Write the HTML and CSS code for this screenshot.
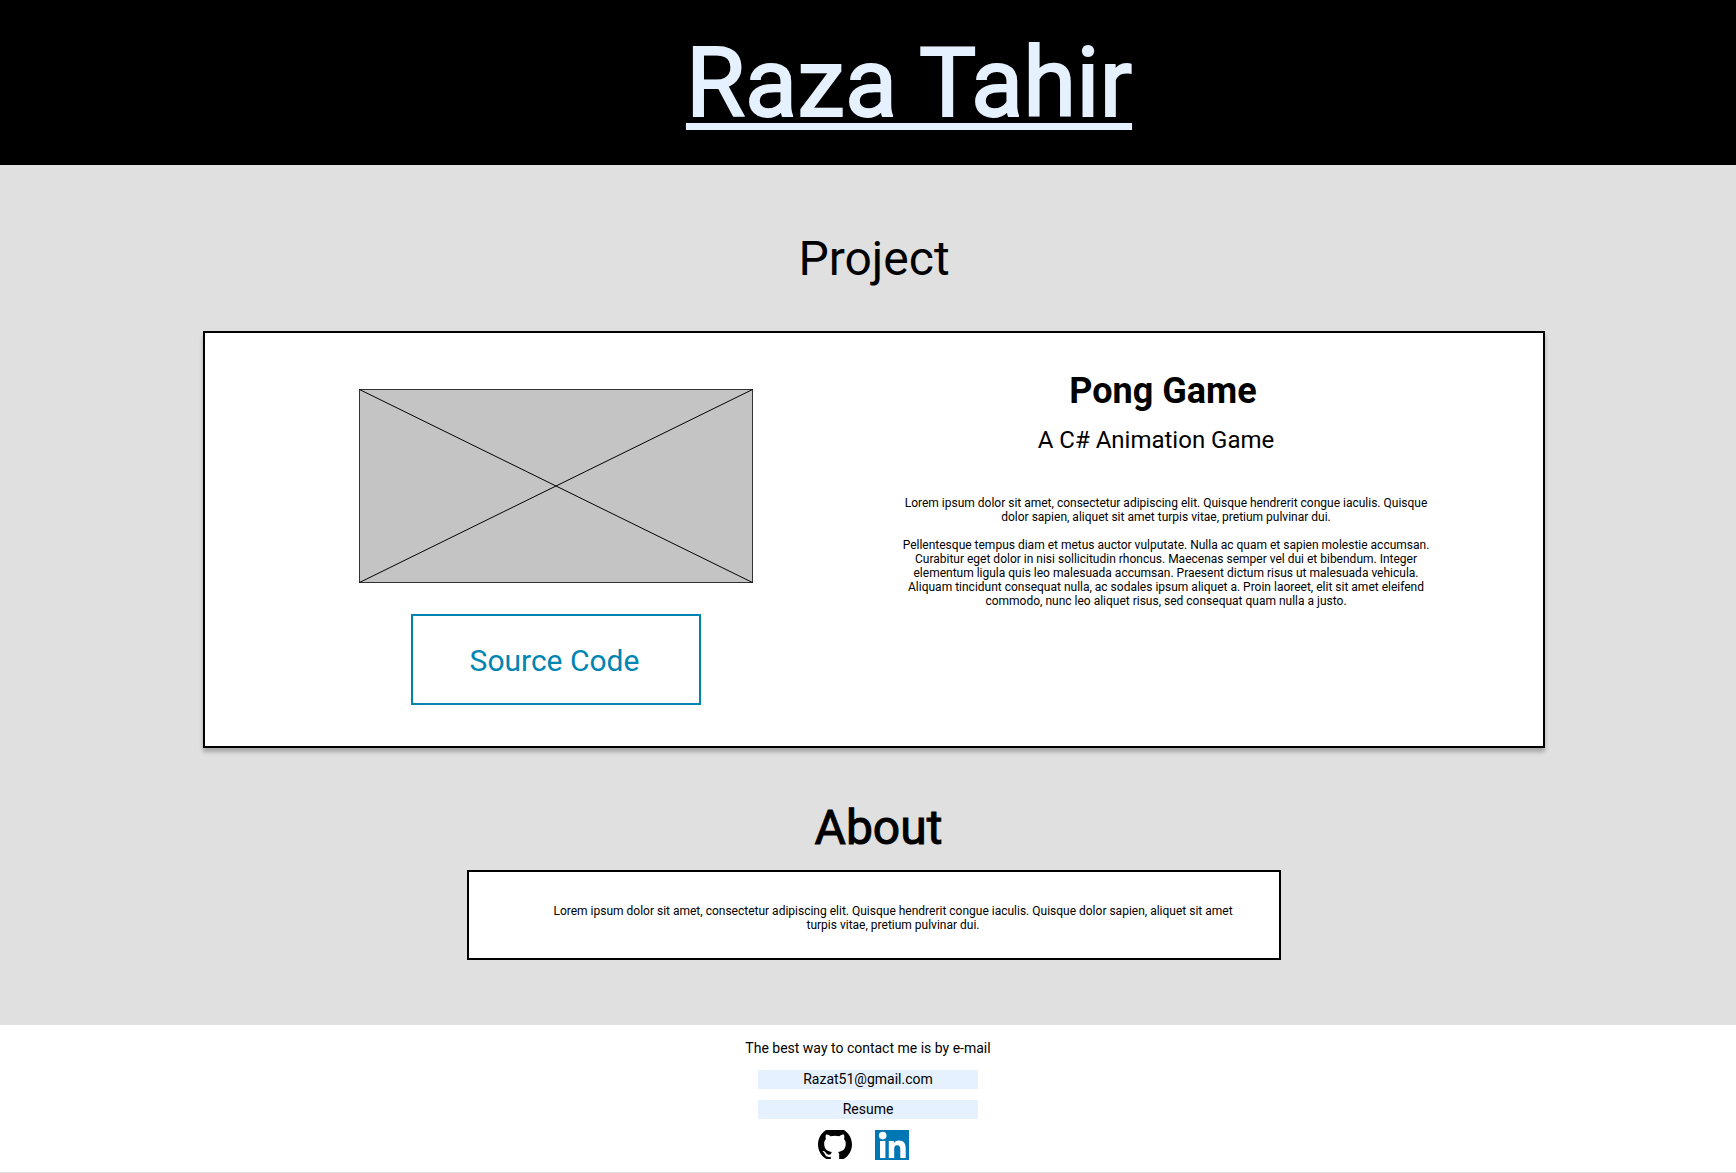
FILE: index.html
```html
<!DOCTYPE html>
<html lang="en">
<head>
  <meta charset="utf-8">
  <meta name="viewport" content="width=device-width, initial-scale=1">
  <title>Raza Tahir</title>
  <link rel="stylesheet" href="styles.css">
</head>
<body>
  <header class="site-header">
    <h1 class="site-title">Raza Tahir</h1>
  </header>

  <main class="content">
    <h2 class="section-title">Project</h2>
    <section class="project-card">
      <div class="project-media">
        <svg class="placeholder" viewBox="0 0 394 194" preserveAspectRatio="none" role="img" aria-label="Project preview">
          <rect x="0.5" y="0.5" width="393" height="193" fill="#c4c4c4" stroke="#333" />
          <path d="M0.5 0.5 393.5 193.5M393.5 0.5 0.5 193.5" stroke="#000" fill="none" />
        </svg>
        <button class="source-button" type="button">Source Code</button>
      </div>
      <div class="project-text">
        <h3 class="project-name">Pong Game</h3>
        <p class="project-tagline">A C# Animation Game</p>
        <p class="body-text">Lorem ipsum dolor sit amet, consectetur adipiscing elit. Quisque hendrerit congue iaculis. Quisque dolor sapien, aliquet sit amet turpis vitae, pretium pulvinar dui.</p>
        <p class="body-text">Pellentesque tempus diam et metus auctor vulputate. Nulla ac quam et sapien molestie accumsan. Curabitur eget dolor in nisi sollicitudin rhoncus. Maecenas semper vel dui et bibendum. Integer elementum ligula quis leo malesuada accumsan. Praesent dictum risus ut malesuada vehicula. Aliquam tincidunt consequat nulla, ac sodales ipsum aliquet a. Proin laoreet, elit sit amet eleifend commodo, nunc leo aliquet risus, sed consequat quam nulla a justo.</p>
      </div>
    </section>

    <h2 class="section-title about-title">About</h2>
    <section class="about-card">
      <p class="body-text">Lorem ipsum dolor sit amet, consectetur adipiscing elit. Quisque hendrerit congue iaculis. Quisque dolor sapien, aliquet sit amet turpis vitae, pretium pulvinar dui.</p>
    </section>
  </main>

  <footer class="site-footer">
    <p class="contact-note">The best way to contact me is by e-mail</p>
    <a class="contact-link" href="mailto:Razat51@gmail.com">Razat51@gmail.com</a>
    <a class="contact-link" href="#resume">Resume</a>
    <div class="social">
      <a class="social-link" href="#github" aria-label="GitHub">
        <svg width="34" height="29" viewBox="0 2.1 24 20.5">
          <path d="M12 .297c-6.63 0-12 5.373-12 12 0 5.303 3.438 9.8 8.205 11.385.6.113.82-.258.82-.577 0-.285-.01-1.04-.015-2.04-3.338.724-4.042-1.61-4.042-1.61C4.422 18.07 3.633 17.7 3.633 17.7c-1.087-.744.084-.729.084-.729 1.205.084 1.838 1.236 1.838 1.236 1.07 1.835 2.809 1.305 3.495.998.108-.776.417-1.305.76-1.605-2.665-.3-5.466-1.332-5.466-5.93 0-1.31.465-2.38 1.235-3.22-.135-.303-.54-1.523.105-3.176 0 0 1.005-.322 3.3 1.23.96-.267 1.98-.399 3-.405 1.02.006 2.04.138 3 .405 2.28-1.552 3.285-1.23 3.285-1.23.645 1.653.24 2.873.12 3.176.765.84 1.23 1.91 1.23 3.22 0 4.61-2.805 5.625-5.475 5.92.42.36.81 1.096.81 2.22 0 1.606-.015 2.896-.015 3.286 0 .315.21.69.825.57C20.565 22.092 24 17.592 24 12.297c0-6.627-5.373-12-12-12" />
        </svg>
      </a>
      <a class="social-link" href="#linkedin" aria-label="LinkedIn">
        <svg width="34" height="30" viewBox="0 0 34 30">
          <rect width="34" height="30" fill="#0077b5" />
          <g fill="#fff">
            <circle cx="7.7" cy="5.6" r="3.8" />
            <rect x="5" y="11" width="5.4" height="17" />
            <path d="M13.8 11h5v2.300c.9-1.600 2.700-2.700 5-2.700 5.200 0 6.900 3.200 6.900 8V28h-5.400v-8.300c0-2.200-.3-4.500-3-4.500-2.800 0-3.100 2.100-3.100 4.400V28h-5.400z" />
          </g>
        </svg>
      </a>
    </div>
  </footer>
</body>
</html>
```
FILE: styles.css
```css
* {
  box-sizing: border-box;
}

body {
  margin: 0;
  background: #e0e0e0;
  color: #000;
  font-family: Roboto, "Liberation Sans", sans-serif;
}

h1, h2, h3, p {
  margin: 0;
  text-align: center;
}

.site-header {
  padding: 27px 0 25px 82px;
  background: #000;
}

.site-title {
  color: #e5f1ff;
  font-size: 96px;
  font-weight: 400;
  line-height: 113px;
  text-decoration: underline;
  text-decoration-thickness: 7px;
  text-underline-offset: 7px;
  -webkit-text-stroke: 2px #e5f1ff;
}

.content {
  padding: 66px 191px 65px 203px;
}

.section-title {
  font-size: 48px;
  font-weight: 400;
  line-height: 56px;
}

.about-title {
  margin-top: 52px;
  padding-left: 9px;
  -webkit-text-stroke: 1px #000;
}

.project-card {
  display: grid;
  grid-template-columns: 637fr 584fr;
  margin-top: 44px;
  padding: 0 85px 41px 32px;
  border: 2px solid #000;
  background: #fff;
  box-shadow: 0 4px 4px rgba(0, 0, 0, 0.25);
}

.project-media {
  display: flex;
  flex-direction: column;
  align-items: center;
  gap: 31px;
  padding-top: 56px;
}

.placeholder {
  width: 100%;
  max-width: 394px;
  height: 194px;
}

.source-button {
  width: 290px;
  height: 91px;
  padding: 2px 2px 0 0;
  border: 2px solid #0085b2;
  background: #fff;
  color: #0085b2;
  font-family: inherit;
  font-size: 30px;
}

.project-text {
  display: flex;
  flex-direction: column;
  gap: 14px;
  padding: 37px 24px 0;
}

.project-name {
  padding-right: 6px;
  font-size: 36px;
  font-weight: 700;
  line-height: 42px;
}

.project-tagline {
  padding: 0 20px 28px 0;
  font-size: 24px;
  line-height: 28px;
}

.body-text {
  font-size: 12px;
  line-height: 14px;
}

.about-card {
  max-width: 814px;
  margin: 14px auto 0;
  padding: 32px 44px 26px 82px;
  border: 2px solid #000;
  background: #fff;
}

.site-footer {
  display: flex;
  flex-direction: column;
  align-items: center;
  padding: 15px 0 12px;
  background: #fff;
}

.contact-note {
  margin-bottom: 3px;
  font-size: 14px;
  line-height: 16px;
}

.contact-link {
  width: 220px;
  margin-top: 11px;
  background: #e5f1ff;
  color: #000;
  font-size: 14px;
  line-height: 19px;
  text-align: center;
  text-decoration: none;
}

.social {
  display: flex;
  gap: 23px;
  margin-top: 11px;
  padding-right: 10px;
}

.social-link svg {
  display: block;
}
```
